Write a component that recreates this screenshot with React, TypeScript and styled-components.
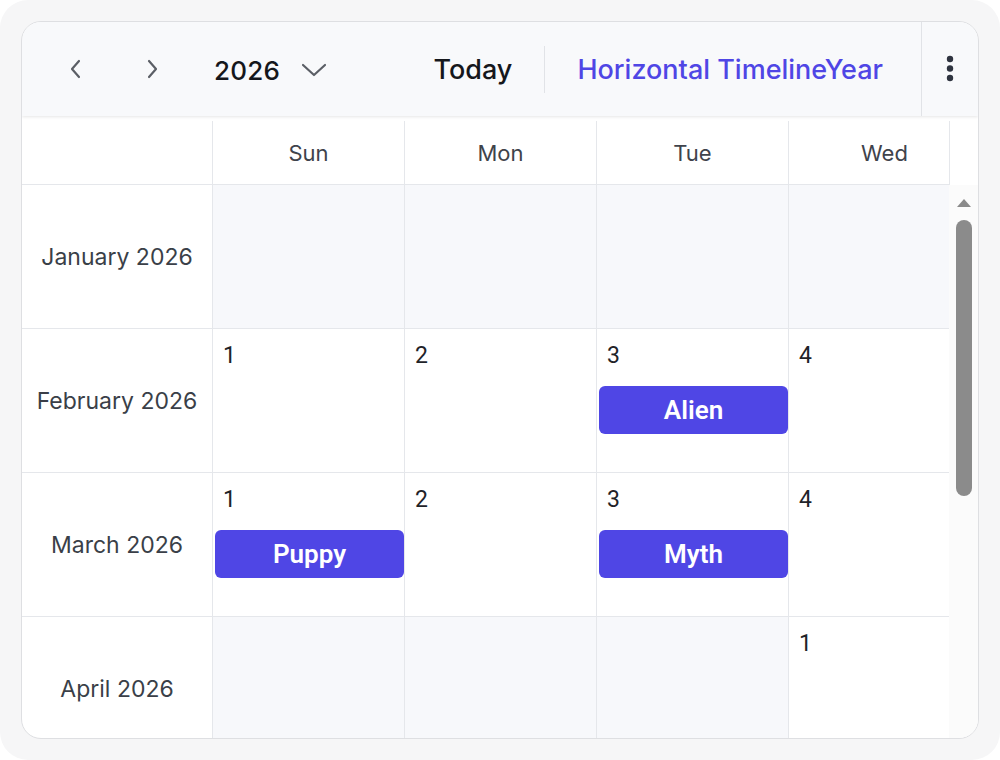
import styled, { createGlobalStyle } from "styled-components";

const GlobalStyle = createGlobalStyle`
  html, body {
    margin: 0;
    padding: 0;
    background: #ffffff;
  }
  * {
    box-sizing: border-box;
  }
`;

type Day = { num?: number; event?: string };
type MonthRow = { label: string; days: Day[] };

const dayNames = ["Sun", "Mon", "Tue", "Wed"];

const monthRows: MonthRow[] = [
  {
    label: "January 2026",
    days: [{}, {}, {}, {}],
  },
  {
    label: "February 2026",
    days: [{ num: 1 }, { num: 2 }, { num: 3, event: "Alien" }, { num: 4 }],
  },
  {
    label: "March 2026",
    days: [{ num: 1, event: "Puppy" }, { num: 2 }, { num: 3, event: "Myth" }, { num: 4 }],
  },
  {
    label: "April 2026",
    days: [{}, {}, {}, { num: 1 }],
  },
];

const ChevronLeft = () => (
  <svg width="16" height="20" viewBox="0 0 16 20" fill="none">
    <path d="M11 2 L4 10 L11 18" stroke="#5b5f66" strokeWidth="2.2" strokeLinecap="round" strokeLinejoin="round" />
  </svg>
);

const ChevronRight = () => (
  <svg width="16" height="20" viewBox="0 0 16 20" fill="none">
    <path d="M5 2 L12 10 L5 18" stroke="#5b5f66" strokeWidth="2.2" strokeLinecap="round" strokeLinejoin="round" />
  </svg>
);

const ChevronDown = () => (
  <svg width="28" height="16" viewBox="0 0 28 16" fill="none">
    <path d="M3 3 L14 13 L25 3" stroke="#5b5f66" strokeWidth="2.2" strokeLinecap="round" strokeLinejoin="round" />
  </svg>
);

const DotsVertical = () => (
  <svg width="10" height="30" viewBox="0 0 10 30" fill="#2f3440">
    <circle cx="5" cy="5" r="3.2" />
    <circle cx="5" cy="14.5" r="3.2" />
    <circle cx="5" cy="24" r="3.2" />
  </svg>
);

export default function App() {
  return (
    <>
      <GlobalStyle />
      <Frame>
        <Card>
          <Toolbar>
            <NavButton>
              <ChevronLeft />
            </NavButton>
            <NavButton $gap={36}>
              <ChevronRight />
            </NavButton>
            <YearPicker>
              <YearText>2026</YearText>
              <ChevronDown />
            </YearPicker>
            <RightGroup>
              <TodayText>Today</TodayText>
              <Separator />
              <ViewText>Horizontal TimelineYear</ViewText>
            </RightGroup>
            <MenuButton>
              <DotsVertical />
            </MenuButton>
          </Toolbar>

          <Main>
            <HeaderBar>
              <HeaderClip>
                <HeaderRow>
                  <CornerCell />
                  {dayNames.map((d) => (
                    <HeaderCell key={d}>{d}</HeaderCell>
                  ))}
                </HeaderRow>
              </HeaderClip>
            </HeaderBar>

            <BodyBar>
              <BodyClip>
                {monthRows.map((row) => (
                  <Row key={row.label}>
                    <MonthCell>{row.label}</MonthCell>
                    {row.days.map((day, i) => (
                      <DayCell key={i} $empty={day.num === undefined}>
                        {day.num !== undefined && <DayNum>{day.num}</DayNum>}
                        {day.event && <Event>{day.event}</Event>}
                      </DayCell>
                    ))}
                  </Row>
                ))}
              </BodyClip>
              <ScrollTrack>
                <ScrollArrow />
                <ScrollThumb />
              </ScrollTrack>
            </BodyBar>
          </Main>
        </Card>
      </Frame>
    </>
  );
}

const Frame = styled.div`
  width: 1000px;
  height: 760px;
  padding: 21px;
  background: #f6f6f7;
  border-radius: 28px;
`;

const Card = styled.div`
  width: 958px;
  height: 718px;
  border: 1px solid #dedfe2;
  border-radius: 20px;
  background: #ffffff;
  overflow: hidden;
  display: flex;
  flex-direction: column;
`;

const Toolbar = styled.div`
  height: 94px;
  flex-shrink: 0;
  display: flex;
  align-items: center;
  padding-left: 34px;
  background: #f8f9fb;
  box-shadow: 0 1px 3px rgba(0, 0, 0, 0.1);
  position: relative;
  z-index: 1;
  font-family: Inter, "Noto Sans", sans-serif;
`;

const NavButton = styled.div<{ $gap?: number }>`
  width: 40px;
  height: 40px;
  margin-left: ${({ $gap }) => $gap ?? 0}px;
  display: flex;
  align-items: center;
  justify-content: center;
`;

const YearPicker = styled.div`
  display: flex;
  align-items: center;
  gap: 20px;
  margin-left: 42px;
  padding-top: 2px;
`;

const YearText = styled.div`
  font-size: 26px;
  font-weight: 500;
  color: #15171c;
  letter-spacing: 0.2px;
`;

const RightGroup = styled.div`
  margin-left: auto;
  display: flex;
  align-items: center;
  height: 100%;
  padding-right: 38px;
`;

const TodayText = styled.div`
  font-size: 27px;
  font-weight: 500;
  color: #15171c;
`;

const Separator = styled.div`
  width: 1px;
  height: 47px;
  background: #e1e3e7;
  margin: 0 32px;
`;

const ViewText = styled.div`
  font-size: 27px;
  font-weight: 500;
  color: #4f46e5;
`;

const MenuButton = styled.div`
  width: 57px;
  height: 100%;
  border-left: 1px solid #e1e3e7;
  display: flex;
  align-items: center;
  justify-content: center;
`;

const Main = styled.div`
  flex: 1;
  min-height: 0;
  margin-top: 5px;
  display: flex;
  flex-direction: column;
`;

const HeaderBar = styled.div`
  display: flex;
  flex-shrink: 0;
`;

const HeaderClip = styled.div`
  width: 928px;
  overflow: hidden;
  border-right: 1px solid #e5e7eb;
`;

const HeaderRow = styled.div`
  display: flex;
  height: 64px;
  border-bottom: 1px solid #e5e7eb;
  width: max-content;
`;

const CornerCell = styled.div`
  width: 191px;
  flex-shrink: 0;
  border-right: 1px solid #e5e7eb;
`;

const HeaderCell = styled.div`
  width: 192px;
  flex-shrink: 0;
  border-right: 1px solid #e5e7eb;
  display: flex;
  align-items: center;
  justify-content: center;
  font-family: Inter, "Noto Sans", sans-serif;
  font-size: 22px;
  color: #3f434b;
`;

const BodyBar = styled.div`
  flex: 1;
  min-height: 0;
  display: flex;
`;

const BodyClip = styled.div`
  width: 927px;
  overflow: hidden;
`;

const Row = styled.div`
  display: flex;
  height: 144px;
  border-bottom: 1px solid #e5e7eb;
  width: max-content;
`;

const MonthCell = styled.div`
  width: 191px;
  flex-shrink: 0;
  border-right: 1px solid #e5e7eb;
  display: flex;
  align-items: center;
  justify-content: center;
  font-family: Inter, "Noto Sans", sans-serif;
  font-size: 23px;
  color: #3a3f48;
`;

const DayCell = styled.div<{ $empty: boolean }>`
  width: 192px;
  flex-shrink: 0;
  border-right: 1px solid #e5e7eb;
  background: ${({ $empty }) => ($empty ? "#f7f8fb" : "#ffffff")};
  display: flex;
  flex-direction: column;
  padding: 13px 0 0 2px;
`;

const DayNum = styled.div`
  padding-left: 8px;
  font-family: Roboto, "Liberation Sans", sans-serif;
  font-size: 23px;
  line-height: 28px;
  color: #1f2329;
`;

const Event = styled.div`
  margin-top: 16px;
  height: 48px;
  border-radius: 6px;
  background: #4f46e5;
  color: #ffffff;
  display: flex;
  align-items: center;
  justify-content: center;
  font-family: Roboto, "Liberation Sans", sans-serif;
  font-size: 26px;
  font-weight: 600;
`;

const ScrollTrack = styled.div`
  flex: 1;
  background: #fbfbfb;
  display: flex;
  flex-direction: column;
  align-items: center;
  padding-top: 14px;
  gap: 13px;
`;

const ScrollArrow = styled.div`
  width: 0;
  height: 0;
  border-left: 7px solid transparent;
  border-right: 7px solid transparent;
  border-bottom: 8px solid #8a8a8a;
`;

const ScrollThumb = styled.div`
  width: 16px;
  height: 276px;
  border-radius: 8px;
  background: #8b8b8b;
`;
